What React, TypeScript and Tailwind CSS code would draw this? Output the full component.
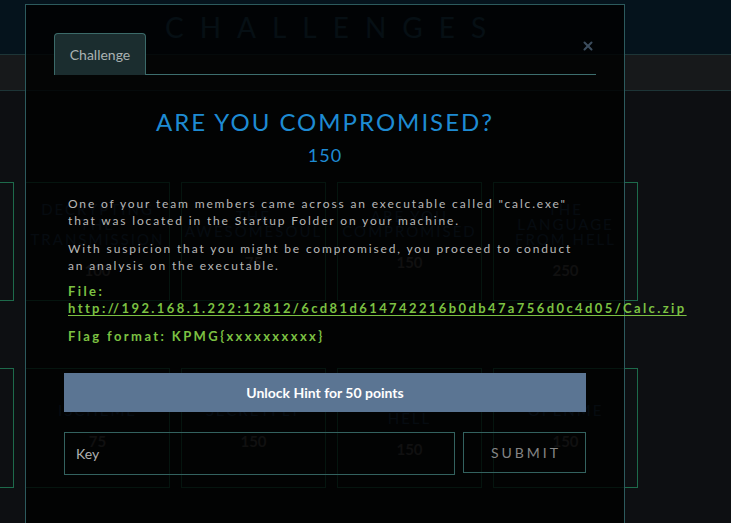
import { X } from 'lucide-react'

const row1 = [
  { title: '', pts: '' },
  { title: 'DECRYPTING THE TRANSMISSION', pts: '100' },
  { title: 'THE AWESOMESOUL', pts: '75' },
  { title: 'ARE YOU COMPROMISED', pts: '150' },
  { title: 'THE LANGUAGE FROM HELL', pts: '250' },
]

const row2 = [
  { title: '', pts: '' },
  { title: 'ISCHEME', pts: '75' },
  { title: 'SECRETFLY', pts: '150' },
  { title: 'TEXT FROM HELL', pts: '150' },
  { title: 'OPENME', pts: '150' },
]

function Card({ title, pts }: { title: string; pts: string }) {
  return (
    <div className="flex h-full w-[145px] shrink-0 flex-col items-center justify-center border border-[#1d6a4b] px-3 text-center">
      <div className="text-[15px] leading-[15px] tracking-[2px] text-[#1f3b52]">{title}</div>
      <div className="mt-3 text-[15px] font-bold text-[#505050]">{pts}</div>
    </div>
  )
}

export default function App() {
  return (
    <div className="relative h-[523px] w-[731px] overflow-hidden bg-[#0d0f12] font-['Lato',sans-serif]">
      {/* page behind the modal */}
      <header className="flex h-[54px] items-center justify-center bg-[#05131c]">
        <h1 className="mr-[80px] pl-[16px] text-[28px] tracking-[16px] text-[#1f4a63]">CHALLENGES</h1>
      </header>
      <nav className="h-[37px] border-y border-[#1d3537] bg-[#17191b]" />

      <main>
        <div className="ml-[-131px] mt-[91px] flex h-[119px] gap-[11px]">
          {row1.map((c, i) => (
            <Card key={i} {...c} />
          ))}
        </div>
        <div className="ml-[-131px] mt-[67px] flex h-[120px] gap-[11px]">
          {row2.map((c, i) => (
            <Card key={i} {...c} />
          ))}
        </div>
      </main>

      {/* modal */}
      <div className="absolute left-[25px] top-[4px] h-[540px] w-[600px] border border-[#2c5a5d] bg-black/[0.8]">
        <div className="relative mx-[28px] mt-[28px] flex border-b border-[#3d6e6e]">
          <div className="mb-[-1px] flex h-[42px] w-[92px] items-center justify-center rounded-t-[4px] border border-b-0 border-[#3b6a69] bg-[#1b2d2f] text-[14px] text-[#aab2b2]">
            Challenge
          </div>
          <button className="absolute right-[1px] top-[6px] text-[#3c4d5e]">
            <X size={14} strokeWidth={3.5} />
          </button>
        </div>

        <div className="mt-[32px] text-center">
          <h2 className="text-[24px] leading-[30px] tracking-[2px] text-[#1e8bd3]">ARE YOU COMPROMISED?</h2>
          <div className="mt-[7px] text-[18px] leading-[22px] tracking-[1px] text-[#1e8bd3]">150</div>
        </div>

        <div className="mx-[38px] mt-[29px] pl-[4px] text-[12px] leading-[17px] tracking-[1.85px] text-[#b8b8b8]">
          <p>
            One of your team members came across an executable called "calc.exe"
            <br />
            that was located in the Startup Folder on your machine.
          </p>
          <p className="mt-[11px]">
            With suspicion that you might be compromised, you proceed to conduct
            <br />
            an analysis on the executable.
          </p>
          <div className="text-[13px] font-bold tracking-[2.4px] text-[#7cc142]">
            <p className="mt-[9px]">File:</p>
            <a className="block whitespace-nowrap underline underline-offset-2">
              http://192.168.1.222:12812/6cd81d614742216b0db47a756d0c4d05/Calc.zip
            </a>
            <p className="mt-[11px]">Flag format: KPMG&#123;xxxxxxxxxx&#125;</p>
          </div>
        </div>

        <div className="mx-[38px] mt-[28px]">
          <button className="h-[39px] w-full bg-[#5b7593] text-[14px] font-bold text-white">
            Unlock Hint for 50 points
          </button>
          <div className="mt-[20px] flex gap-[8px]">
            <input
              placeholder="Key"
              className="h-[43px] w-[391px] border border-[#33625f] bg-transparent px-[11px] text-[14px] text-white outline-none placeholder:text-[#b0b0b0]"
            />
            <button className="h-[41px] flex-1 border border-[#33625f] pl-[3px] text-[14px] tracking-[3px] text-[#858585]">
              SUBMIT
            </button>
          </div>
        </div>
      </div>
    </div>
  )
}
